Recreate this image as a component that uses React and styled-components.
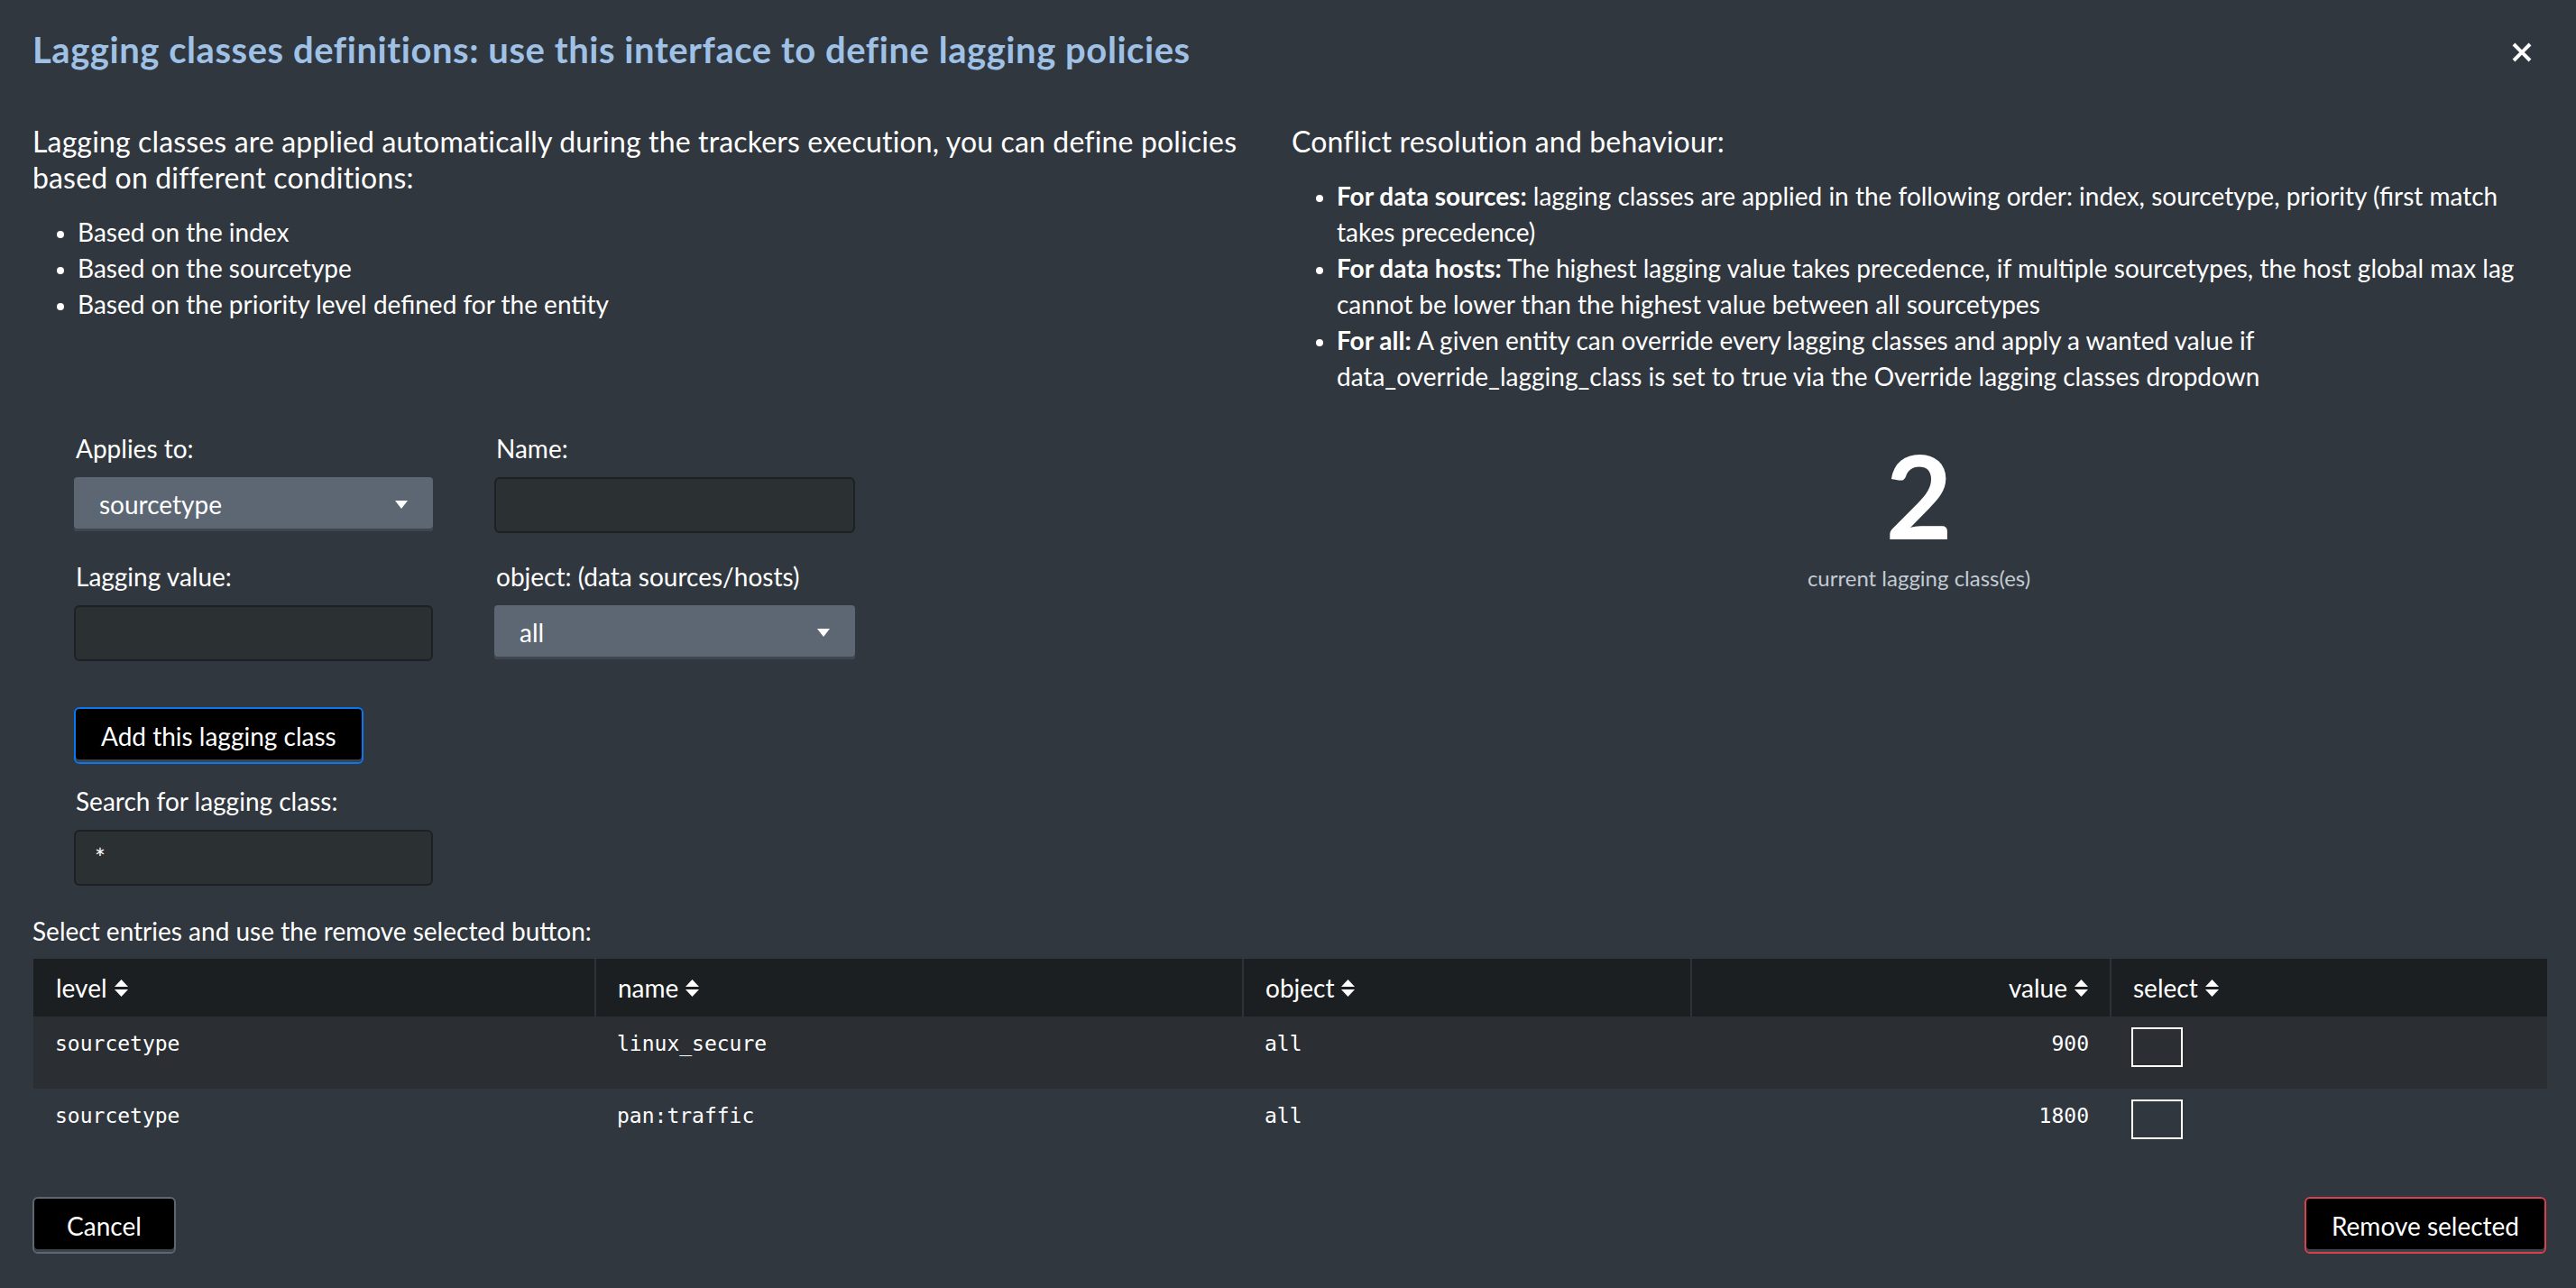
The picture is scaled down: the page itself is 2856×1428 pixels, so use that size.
import styled, { createGlobalStyle } from "styled-components";

const GlobalStyle = createGlobalStyle`
  html, body {
    margin: 0;
    padding: 0;
    background: #31373e;
  }
  body {
    font-family: Lato, "Liberation Sans", sans-serif;
    color: #ffffff;
  }
  * {
    box-sizing: border-box;
  }
`;

const rows = [
  { level: "sourcetype", name: "linux_secure", object: "all", value: 900 },
  { level: "sourcetype", name: "pan:traffic", object: "all", value: 1800 },
];

const columns = [
  { key: "level", label: "level", width: 623 },
  { key: "name", label: "name", width: 718 },
  { key: "object", label: "object", width: 497 },
  { key: "value", label: "value", width: 465, align: "right" },
  { key: "select", label: "select", width: 484 },
];

//------LAYOUT------\\
const Modal = styled.div`
  width: 2856px;
  min-height: 1428px;
  display: flex;
  flex-direction: column;
  background: #31373e;
`;

const Header = styled.header`
  height: 110px;
  padding: 0 49px 0 36px;
  display: flex;
  align-items: center;
  justify-content: space-between;
`;

const Title = styled.h1`
  margin: 0;
  font-size: 40px;
  line-height: 1;
  font-weight: 700;
  letter-spacing: 0.55px;
  color: #9fc1e6;
`;

const CloseButton = styled.button`
  width: 22px;
  height: 22px;
  padding: 0;
  margin-top: 6px;
  border: 0;
  background: none;
  display: flex;
  cursor: pointer;
`;

const Body = styled.main`
  padding: 27px 33px 0 36px;
`;

const Columns = styled.div`
  display: grid;
  grid-template-columns: 1388px 1fr;
  column-gap: 8px;
  align-items: start;
`;

const Column = styled.section`
  display: flex;
  flex-direction: column;
`;

const Lead = styled.p`
  margin: 0;
  font-size: 32px;
  line-height: 40px;
  letter-spacing: 0.15px;
`;

const BulletList = styled.ul`
  margin: 20px 0 0;
  padding-left: 50px;
  font-size: 28px;
  line-height: 40px;

  li::marker {
    font-size: 24px;
  }
  b {
    font-weight: 700;
  }
`;

//------FORM------\\
const Form = styled.form`
  margin: 120px 0 0 46px;
  display: grid;
  grid-template-columns: 398px 400px;
  column-gap: 68px;
  row-gap: 28px;
  align-items: start;
`;

const Field = styled.div`
  display: flex;
  flex-direction: column;
  gap: 12px;
  grid-column: ${({ $span }) => ($span ? "1 / -1" : "auto")};
  width: ${({ $span }) => ($span ? "398px" : "auto")};
`;

const Label = styled.label`
  font-size: 28px;
  line-height: 40px;
  padding-left: 2px;
`;

const SelectBox = styled.div`
  height: 60px;
  padding: 0 28px;
  border-radius: 4px;
  background: #5c6773;
  box-shadow: inset 0 -3px 0 #3e464f;
  display: flex;
  align-items: center;
  justify-content: space-between;
  font-size: 28px;
  color: #ffffff;
`;

const TextInput = styled.input`
  height: 62px;
  width: 100%;
  padding: 0 21px;
  border: 2px solid #1d2125;
  border-radius: 6px;
  background: #2b3033;
  color: #ffffff;
  font-family: Lato, "Liberation Sans", sans-serif;
  font-size: 28px;
  outline: none;
`;

const ButtonRow = styled.div`
  grid-column: 1 / -1;
  margin-top: 23px;
  margin-bottom: -7px;
`;

const Button = styled.button`
  height: 63px;
  min-width: ${({ $minWidth }) => $minWidth || "0"};
  padding: 0 28px;
  border: 2px solid
    ${({ $tone }) =>
      $tone === "primary" ? "#0877f0" : $tone === "danger" ? "#d9404e" : "#5c6773"};
  border-radius: 6px;
  background: #000000;
  box-shadow: inset 0 -3px 0 #3c434b;
  color: #ffffff;
  font-family: Lato, "Liberation Sans", sans-serif;
  font-size: 28px;
  cursor: pointer;
`;

//------COUNTER------\\
const Counter = styled.div`
  margin-top: 48px;
  display: flex;
  flex-direction: column;
  align-items: center;
`;

const CounterValue = styled.div`
  font-size: 128px;
  line-height: 128px;
  font-weight: 700;
`;

const CounterLabel = styled.div`
  margin-top: 12px;
  font-size: 24px;
  line-height: 32px;
  color: #c3cbd4;
`;

//------TABLE------\\
const TableCaption = styled.p`
  margin: 30px 0 11px;
  font-size: 28px;
  line-height: 40px;
`;

const Table = styled.table`
  width: 2787px;
  border-collapse: collapse;
  table-layout: fixed;
`;

const Th = styled.th`
  height: 64px;
  padding: 0 24px;
  background: #1b1f22;
  font-weight: 400;
  font-size: 28px;
  text-align: ${({ $align }) => $align || "left"};
  border-left: 2px solid ${({ $first }) => ($first ? "transparent" : "#2d3339")};
  white-space: nowrap;
`;

const SortLabel = styled.span`
  display: inline-flex;
  align-items: center;
  gap: 8px;
`;

const Tr = styled.tr`
  background: ${({ $striped }) => ($striped ? "#2b2f33" : "transparent")};
`;

const Td = styled.td`
  height: 80px;
  padding: ${({ $tight }) => ($tight ? "12px 23px" : "14px 24px")};
  vertical-align: top;
  font-family: "DejaVu Sans Mono", "Liberation Mono", monospace;
  font-size: 23px;
  line-height: 32px;
  text-align: ${({ $align }) => $align || "left"};
`;

const CheckBox = styled.span`
  display: block;
  width: 57px;
  height: 44px;
  border: 2px solid #ffffff;
`;

const Footer = styled.footer`
  padding: 40px 33px 37px 36px;
  display: flex;
  justify-content: space-between;
`;

const Caret = () => (
  <svg width="14" height="9" viewBox="0 0 14 9">
    <path d="M0 0h14L7 9z" fill="#ffffff" />
  </svg>
);

const SortIcon = () => (
  <svg width="15" height="19" viewBox="0 0 15 19">
    <path d="M7.5 0L15 8H0z M0 11h15l-7.5 8z" fill="#ffffff" />
  </svg>
);

export default function App() {
  return (
    <Modal>
      <GlobalStyle />
      <Header>
        <Title>Lagging classes definitions: use this interface to define lagging policies</Title>
        <CloseButton aria-label="close">
          <svg width="22" height="22" viewBox="0 0 22 22">
            <path d="M2 2l18 18M20 2L2 20" stroke="#ffffff" strokeWidth="4" />
          </svg>
        </CloseButton>
      </Header>

      <Body>
        <Columns>
          <Column>
            <Lead>
              Lagging classes are applied automatically during the trackers execution, you can
              define policies based on different conditions:
            </Lead>
            <BulletList>
              <li>Based on the index</li>
              <li>Based on the sourcetype</li>
              <li>Based on the priority level defined for the entity</li>
            </BulletList>

            <Form onSubmit={(e) => e.preventDefault()}>
              <Field>
                <Label>Applies to:</Label>
                <SelectBox>
                  sourcetype
                  <Caret />
                </SelectBox>
              </Field>
              <Field>
                <Label>Name:</Label>
                <TextInput type="text" />
              </Field>
              <Field>
                <Label>Lagging value:</Label>
                <TextInput type="text" />
              </Field>
              <Field>
                <Label>object: (data sources/hosts)</Label>
                <SelectBox>
                  all
                  <Caret />
                </SelectBox>
              </Field>
              <ButtonRow>
                <Button $tone="primary">Add this lagging class</Button>
              </ButtonRow>
              <Field $span>
                <Label>Search for lagging class:</Label>
                <TextInput type="text" defaultValue="*" />
              </Field>
            </Form>
          </Column>

          <Column>
            <Lead>Conflict resolution and behaviour:</Lead>
            <BulletList>
              <li>
                <b>For data sources:</b> lagging classes are applied in the following order: index,
                sourcetype, priority (first match takes precedence)
              </li>
              <li>
                <b>For data hosts:</b> The highest lagging value takes precedence, if multiple
                sourcetypes, the host global max lag cannot be lower than the highest value between
                all sourcetypes
              </li>
              <li>
                <b>For all:</b> A given entity can override every lagging classes and apply a wanted
                value if data_override_lagging_class is set to true via the Override lagging classes
                dropdown
              </li>
            </BulletList>
            <Counter>
              <CounterValue>{rows.length}</CounterValue>
              <CounterLabel>current lagging class(es)</CounterLabel>
            </Counter>
          </Column>
        </Columns>

        <TableCaption>Select entries and use the remove selected button:</TableCaption>
        <Table>
          <colgroup>
            {columns.map((c) => (
              <col key={c.key} style={{ width: c.width }} />
            ))}
          </colgroup>
          <thead>
            <tr>
              {columns.map((c, i) => (
                <Th key={c.key} $align={c.align} $first={i === 0}>
                  <SortLabel>
                    {c.label}
                    <SortIcon />
                  </SortLabel>
                </Th>
              ))}
            </tr>
          </thead>
          <tbody>
            {rows.map((r, i) => (
              <Tr key={r.name} $striped={i % 2 === 0}>
                <Td>{r.level}</Td>
                <Td>{r.name}</Td>
                <Td>{r.object}</Td>
                <Td $align="right">{r.value}</Td>
                <Td $tight>
                  <CheckBox />
                </Td>
              </Tr>
            ))}
          </tbody>
        </Table>
      </Body>

      <Footer>
        <Button $minWidth="159px">Cancel</Button>
        <Button $tone="danger">Remove selected</Button>
      </Footer>
    </Modal>
  );
}
